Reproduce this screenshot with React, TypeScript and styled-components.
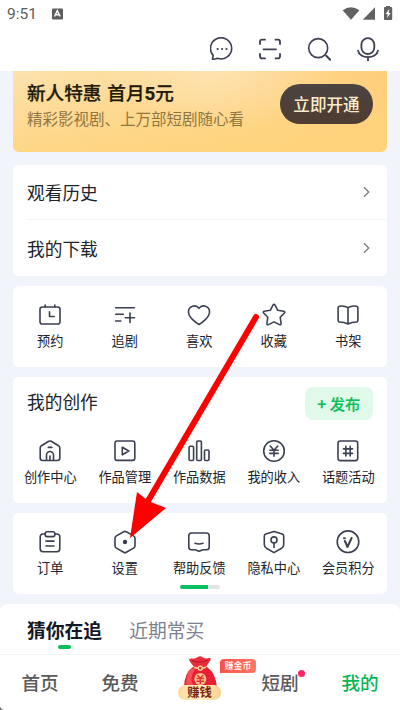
import React from "react";
import styled, { createGlobalStyle } from "styled-components";

const Global = createGlobalStyle`
  * { box-sizing: border-box; }
  body { margin: 0; background: #f1f4fa; }
  body, button { font-family: "Noto Sans CJK SC", "Noto Sans", sans-serif; }
`;

const Screen = styled.main`
  position: relative;
  width: 400px;
  height: 710px;
  overflow: hidden;
  background: #f1f4fa;
  color: #20232b;
  display: flex;
  flex-direction: column;
`;

const Header = styled.header`
  height: 71px;
  flex: none;
  background: #fff;
`;

const StatusBar = styled.div`
  height: 28px;
  display: flex;
  align-items: center;
  padding: 0 7px;
  color: #5d5d5d;
`;

const Clock = styled.span`
  font: 400 15.5px/28px Roboto, sans-serif;
  width: 45px;
`;

const StatusIcons = styled.div`
  margin-left: auto;
  display: flex;
  align-items: center;
`;

const Tools = styled.div`
  display: flex;
  justify-content: flex-end;
  gap: 24.8px;
  padding: 9px 20px 0 0;
  height: 43px;
`;

const Stroke = styled.svg.attrs({ viewBox: "0 0 24 24" })<{ $w?: number }>`
  width: 24px;
  height: 24px;
  flex: none;
  display: block;
  fill: none;
  stroke: #3b4050;
  stroke-width: ${(p) => p.$w ?? 1.6};
  stroke-linecap: round;
  stroke-linejoin: round;
`;

const Banner = styled.section`
  flex: none;
  margin: 0 13.5px 13px 13px;
  height: 81px;
  padding: 8px 13.5px 0 14px;
  border-radius: 0 0 6px 6px;
  display: flex;
  justify-content: space-between;
  background: radial-gradient(ellipse 120px 60px at 205px 0, rgba(255, 232, 194, 0.6), transparent),
    linear-gradient(175deg, rgba(255, 213, 122, 0) 0%, #ffd37c 90%),
    linear-gradient(90deg, #fde2ae 0%, #fddc9c 50%, #ffcc7a 100%);
`;

const BannerTitle = styled.div`
  font-size: 18.6px;
  line-height: 26px;
  font-weight: 500;
  color: #241a08;
  white-space: nowrap;
  word-spacing: 1.8px;
  -webkit-text-stroke: 0.25px #241a08;
  b { font-family: Roboto, sans-serif; font-weight: 700; font-size: 18.8px; }
`;

const BannerText = styled.div`
  font-size: 15.5px;
  line-height: 24px;
  margin-top: -1px;
  color: #907642;
  white-space: nowrap;
`;

const OpenButton = styled.button`
  border: 0;
  padding: 0 0 1px;
  margin-top: 5px;
  width: 93px;
  height: 40px;
  border-radius: 20px;
  background: linear-gradient(#4b4441, #503c31);
  color: #fdeccb;
  font-size: 16.6px;
  font-weight: 500;
`;

const Card = styled.section<{ $h: number; $gap: number }>`
  flex: none;
  height: ${(p) => p.$h}px;
  margin: 0 13.5px ${(p) => p.$gap}px 13px;
  background: #fff;
  border-radius: 6px;
`;

const LinkRow = styled.div<{ $line?: boolean }>`
  height: 55px;
  margin-left: 14px;
  padding-right: 16px;
  display: flex;
  align-items: center;
  justify-content: space-between;
  font-size: 17.7px;
  border-bottom: ${(p) => (p.$line ? "1px solid #f3f4f6" : "0")};
`;

const Chevron = styled.svg`
  width: 9px;
  height: 12px;
  fill: none;
  stroke: #747985;
  stroke-width: 1.3;
`;

const CardHead = styled.div`
  display: flex;
  justify-content: space-between;
  height: 45px;
  padding: 10px 13.5px 0 14px;
  font-size: 17.7px;
  line-height: 29px;
`;

const Publish = styled.button`
  width: 68.5px;
  height: 33px;
  border: 0;
  padding: 0 0 2px;
  border-radius: 8px;
  background: #e1f9e8;
  color: #0abf5b;
  font-size: 15.3px;
  font-weight: 500;
  white-space: pre;
  -webkit-text-stroke: 0.2px #0abf5b;
  b { font-weight: 700; }
`;

const Grid = styled.div`
  display: grid;
  grid-template-columns: repeat(5, 74.5px);
`;

const Entry = styled.div`
  display: flex;
  flex-direction: column;
  align-items: center;
  padding-top: 16.5px;
  font-size: 13.2px;
  line-height: 20px;
  white-space: nowrap;
  span { margin-top: 4.5px; }
`;

const Pager = styled.div`
  width: 40px;
  height: 4px;
  border-radius: 2px;
  margin: 7px auto 0;
  background: linear-gradient(90deg, #09c160 28px, #e3e4e8 28px);
`;

const TabsCard = styled.section`
  flex: none;
  height: 51px;
  border-radius: 8px 8px 0 0;
  background: #fff;
  border-bottom: 1px solid #f5f5f7;
  display: flex;
  gap: 27px;
  padding: 11.5px 27px 0;
`;

const Tab = styled.div<{ $active?: boolean }>`
  font-size: 18.8px;
  line-height: 28px;
  font-weight: ${(p) => (p.$active ? 700 : 400)};
  color: ${(p) => (p.$active ? "#111827" : "#7d818f")};
`;

const TabMark = styled.div`
  width: 13px;
  height: 3.5px;
  border-radius: 2px;
  margin: 1.5px auto 0;
  background: #08bf5b;
`;

const Nav = styled.nav`
  flex: 1;
  background: #fff;
  display: grid;
  grid-template-columns: repeat(5, 80px);
`;

const NavItem = styled.div<{ $active?: boolean }>`
  position: relative;
  text-align: center;
  font-size: 18.6px;
  line-height: 27px;
  padding-top: 12.5px;
  font-weight: 500;
  color: ${(p) => (p.$active ? "#08b653" : "#5a5a5a")};
`;

const BagArt = styled.svg`
  display: block;
  width: 46px;
  height: 46px;
  margin: -12.5px 0 0 17px;
`;

const BagLabel = styled.span`
  position: absolute;
  left: 18px;
  top: 30px;
  width: 43px;
  height: 14.5px;
  border-radius: 7px;
  background: linear-gradient(90deg, #ffda99, #fff0c8 50%, #f6d38c);
  color: #7b250b;
  font-size: 12.3px;
  line-height: 14px;
  font-weight: 700;
`;

const CoinBadge = styled.span`
  position: absolute;
  left: 60px;
  top: 4px;
  width: 36px;
  height: 13.5px;
  border-radius: 4px 4px 4px 0;
  background: linear-gradient(90deg, #fa5149, #ff7868);
  color: #fff;
  font-size: 9px;
  line-height: 13px;
  z-index: 1;
`;

const Dot = styled.i`
  position: absolute;
  left: 58px;
  top: 15px;
  width: 7px;
  height: 7px;
  border-radius: 50%;
  background: #fa2662;
`;

const Pointer = styled.svg`
  position: absolute;
  left: 0;
  top: 0;
  width: 400px;
  height: 710px;
  pointer-events: none;
`;

const CornerMark = styled.svg`
  position: absolute;
  left: 0;
  bottom: 0;
  width: 3px;
  height: 3px;
`;

const icons: Record<string, React.ReactNode> = {
  预约: <><rect x="2" y="4" width="20" height="17" rx="2.3" /><path d="M7.2 2v2M16.8 2v2M11.5 8.7v4.8h4.7" /></>,
  追剧: <path d="M2.6 4.7h18.8M2.6 11.2h7.7M2.6 18h5.2M17 10v9.4M12.3 14.7h9.2" />,
  喜欢: <path d="M12 21.5C9.5 20.2 1.8 14.7 1.5 9.2C1.2 2.7 9 1 12 5.4C15 1 22.8 2.7 22.5 9.2C22.2 14.7 14.5 20.2 12 21.5Z" />,
  收藏: <path d="M11.1 1.9Q12 .5 12.9 1.9L15.7 7.3L21.8 8.3Q23.4 8.8 22.3 10L18.2 14.3L19.1 20.5Q19.1 22.3 17.5 21.6L12 18.9L6.5 21.6Q4.9 22.3 4.9 20.5L5.8 14.3L1.7 10Q.6 8.8 2.2 8.3L8.3 7.3Z" />,
  书架: <path d="M12 4.6v16.4M12 4.6C9 2.8 6.2 2.7 3.5 3.2Q2.1 3.5 2.1 4.8V17.5Q2.1 19 3.5 19C7 19 9 19.4 12 21C15 19.4 17 19 20.5 19Q21.9 19 21.9 17.5V4.8Q21.9 3.5 20.5 3.2C17.8 2.7 15 2.8 12 4.6Z" />,
  创作中心: <><path d="M10.8 2.3Q12 1.6 13.2 2.3L20.6 6.7Q21.8 7.5 21.8 9V19Q21.8 21.5 19.4 21.5H4.6Q2.2 21.5 2.2 19V9Q2.2 7.5 3.4 6.7Z" /><path d="M8.5 21.2V16a3.5 3.5 0 0 1 7 0v5.2M12 17v4M10.3 8.4h3.6" /></>,
  作品管理: <><rect x="2" y="2" width="19.8" height="19.4" rx="2.2" /><path d="M9.3 8.2L15.8 12L9.3 15.8Z" /></>,
  作品数据: <><rect x="2.1" y="7.2" width="4.5" height="14.3" rx="1.2" /><rect x="9.7" y="2" width="4.7" height="19.5" rx="1.2" /><rect x="17.5" y="11" width="4.5" height="10.5" rx="1.2" /></>,
  我的收入: <><circle cx="12" cy="12" r="10.3" /><path d="M8.2 7l3.8 4.3L15.8 7M7.8 11.3h8.4M7.8 14.4h8.4M12 11.3v6" /></>,
  话题活动: <><rect x="2" y="2" width="19.7" height="19.6" rx="2.3" /><path d="M9.9 7.2v9.8M14.2 7.2v9.8M7.5 9.9h9M7.5 14.4h9" /></>,
  订单: <><path d="M7.5 4H5Q2.2 4 2.2 7V18.5Q2.2 21.7 5 21.7H19Q21.8 21.7 21.8 18.5V7Q21.8 4 19 4H16.7" /><rect x="7.2" y="1.7" width="9.6" height="4.9" rx="1.8" /><path d="M8 11.1h8M8 16h8" /></>,
  设置: <><path d="M10.7 1.8Q12 1 13.3 1.8L20.6 5.9Q22 6.7 22 8.2V15.8Q22 17.3 20.6 18.1L13.3 22.2Q12 23 10.7 22.2L3.4 18.1Q2 17.3 2 15.8V8.2Q2 6.7 3.4 5.9Z" /><circle cx="12" cy="12" r="1.4" fill="#303542" /></>,
  帮助反馈: <><path d="M4.5 3H19.5Q22.2 3 22.2 5.7V17Q22.2 19.7 19.5 19.7H16L12 21.3L8 19.7H4.5Q1.8 19.7 1.8 17V5.7Q1.8 3 4.5 3Z" /><path d="M8 13.3Q12 14.7 16 13.3" /></>,
  隐私中心: <><path d="M12 1.4L20.2 3.9Q21.7 4.4 21.7 6V14.4Q21.7 16.8 19.6 18.2L12 22.6L4.4 18.2Q2.3 16.8 2.3 14.4V6Q2.3 4.4 3.8 3.9Z" /><circle cx="12" cy="9.9" r="3" /><path d="M12 13v4.5" /></>,
  会员积分: <><circle cx="12" cy="11.7" r="10.8" /><path d="M8.9 11L11.5 17L15.6 8" strokeWidth="2" /><path d="M8 8.2h.8" strokeWidth="2" /></>,
};

function EntryGrid({ names }: { names: string[] }) {
  return (
    <Grid>
      {names.map((name) => (
        <Entry key={name}><Stroke>{icons[name]}</Stroke><span>{name}</span></Entry>
      ))}
    </Grid>
  );
}

function LinkLine({ title, line }: { title: string; line?: boolean }) {
  return (
    <LinkRow $line={line}>
      {title}
      <Chevron viewBox="0 0 9 12"><path d="M2 1.2L6.7 6L2 10.8" /></Chevron>
    </LinkRow>
  );
}

export default function App() {
  return (
    <Screen>
      <Global />
      <Header>
        <StatusBar>
          <Clock>9:51</Clock>
          <svg width="11" height="12" viewBox="0 0 11 12">
            <rect y=".5" width="11" height="11" rx="1" fill="#5d5d5d" />
            <path d="M2.5 8.5L5.3 2.6L8.2 8.5M4 6.8h2.8" fill="none" stroke="#fff" strokeWidth="1.4" />
          </svg>
          <StatusIcons>
            <svg width="51" height="16" viewBox="0 0 51 16" fill="#626262">
              <path d="M.6 4.2Q9 -1.9 17.4 4.2L9 13.7Z" />
              <path d="M33 1.3V13.8H20.7Z" />
              <path d="M42 1.9Q42 1.1 42.8 1.1H44V0H48V1.1H49.3Q50.2 1.1 50.2 2V13.1Q50.2 14.1 49.3 14.1H42.8Q42 14.1 42 13.1Z" />
              <path d="M47.3 3L43.5 8h2.2L45 12L48.7 6.9h-2Z" fill="#fff" />
            </svg>
          </StatusIcons>
        </StatusBar>
        <Tools>
          <Stroke>
            <path d="M2.4 22.3L3.2 18.4A10.6 10.6 0 1 1 7.5 21.3Q5 22.4 2.4 22.3Z" />
            <g fill="#3b4050" stroke="none"><circle cx="7.6" cy="12" r="1.1" /><circle cx="12.1" cy="12" r="1.1" /><circle cx="16.5" cy="12" r="1.1" /></g>
          </Stroke>
          <Stroke $w={1.8}><path d="M2 7V4.8Q2 2.7 4.1 2.7H7M17.5 2.7h2.4Q22 2.7 22 4.8V7M22 17v2.2Q22 21.4 19.9 21.4H17.5M7 21.4H4.1Q2 21.4 2 19.2V17M5.5 12.3h12.5" /></Stroke>
          <Stroke><circle cx="11.2" cy="11.1" r="9.5" /><path d="M19.2 18.8l4 4" strokeWidth="2" /></Stroke>
          <Stroke $w={1.8}><rect x="5.4" y="1.2" width="12.9" height="15.8" rx="6.4" /><path d="M2.1 13.6C3.2 22.4 20.8 22.4 21.9 13.6M12 20v4" /></Stroke>
        </Tools>
      </Header>

      <Banner>
        <div>
          <BannerTitle>新人特惠 首月<b>5</b>元</BannerTitle>
          <BannerText>精彩影视剧、上万部短剧随心看</BannerText>
        </div>
        <OpenButton>立即开通</OpenButton>
      </Banner>

      <Card $h={111} $gap={10}>
        <LinkLine title="观看历史" line />
        <LinkLine title="我的下载" />
      </Card>
      <Card $h={81} $gap={10}><EntryGrid names={["预约", "追剧", "喜欢", "收藏", "书架"]} /></Card>
      <Card $h={126} $gap={10}>
        <CardHead>我的创作<Publish><b>+</b> 发布</Publish></CardHead>
        <EntryGrid names={["创作中心", "作品管理", "作品数据", "我的收入", "话题活动"]} />
      </Card>
      <Card $h={81} $gap={10}>
        <EntryGrid names={["订单", "设置", "帮助反馈", "隐私中心", "会员积分"]} />
        <Pager />
      </Card>
      <TabsCard>
        <Tab $active>猜你在追<TabMark /></Tab>
        <Tab>近期常买</Tab>
      </TabsCard>
      <Nav>
        <NavItem>首页</NavItem>
        <NavItem>免费</NavItem>
        <NavItem>
          <BagArt viewBox="0 0 46 46">
            <path d="M16 12Q7 18 7 33H40Q39 18 30 12Z" fill="#e82036" />
            <path d="M13 14Q8 23 10 32H17Q11 23 19 13Z" fill="#f65055" />
            <path d="M17 12L12.5 6Q11 3.5 15 3.6Q18 4 21 2Q23 .5 26 2.5Q29 4 32 3Q35 2.5 33 5.8L29 12Z" fill="#e92b3c" />
            <path d="M15 5.5Q22 9 31 5" fill="none" stroke="#ae152b" strokeWidth="1" />
            <path d="M17 12.2Q23 14.5 29 12.2" fill="none" stroke="#fac077" strokeWidth="1.5" />
            <circle cx="23.3" cy="13.2" r="2" fill="#dc3439" stroke="#ffd897" strokeWidth="1.3" />
            <circle cx="23.3" cy="24" r="6" fill="#ffc989" />
            <path d="M20.3 20l3 3.2 3-3.2M19.5 23.5h7.6M19.5 26.2h7.6M23.3 23v6" fill="none" stroke="#e33335" strokeWidth="1.5" />
          </BagArt>
          <BagLabel>赚钱</BagLabel>
          <CoinBadge>赚金币</CoinBadge>
        </NavItem>
        <NavItem>短剧<Dot /></NavItem>
        <NavItem $active>我的</NavItem>
      </Nav>
      <Pointer viewBox="0 0 400 710">
        <path d="M256 317L148 501" stroke="#f00" strokeWidth="6" strokeLinecap="round" />
        <path d="M130 538L137 492L148 501L166 508Z" fill="#f00" />
      </Pointer>
      <CornerMark viewBox="0 0 3 3"><path d="M0 0L3 3H0Z" fill="#777" /></CornerMark>
    </Screen>
  );
}
